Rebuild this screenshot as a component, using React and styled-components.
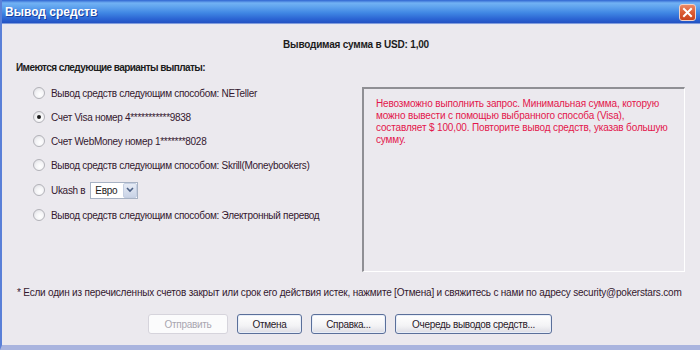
import React from "react";
import styled, { createGlobalStyle } from "styled-components";

const FONT = `"Liberation Sans", Arial, sans-serif`;

const Global = createGlobalStyle`
  html, body { margin: 0; padding: 0; background: #ebe9ee; }
  body { font-family: ${FONT}; }
  * { box-sizing: border-box; }
`;

const Window = styled.div`
  width: 700px;
  height: 350px;
  display: flex;
  flex-direction: column;
  background: #ebe9ee;
  border-left: 2px solid #5a80d8;
  border-bottom: 5px solid #a9b4de;
  overflow: hidden;
`;

const TitleBar = styled.div`
  height: 25px;
  flex: none;
  display: flex;
  align-items: center;
  justify-content: space-between;
  padding: 0 3px 1px 3px;
  margin-left: -2px;
  background: linear-gradient(
    to bottom,
    #2f64d0 0px,
    #72b2f4 3px,
    #5fa3ee 7px,
    #3f86e3 13px,
    #2b64d3 19px,
    #2352c2 23px,
    #dfe6f6 24px,
    #ebe9ee 25px
  );
`;

const Title = styled.span`
  color: #fff;
  font-weight: bold;
  font-size: 12px;
  text-shadow: 1px 1px 0 #1a3f9e;
  padding-left: 2px;
`;

const CloseButton = styled.div`
  width: 17px;
  height: 17px;
  border-radius: 3px;
  border: 1px solid #f3d2c6;
  background: linear-gradient(to bottom, #eb8a68 0%, #dc5e36 45%, #c8421c 100%);
  display: flex;
  align-items: center;
  justify-content: center;
  margin-right: 1px;
`;

const Body = styled.div`
  flex: 1;
  display: flex;
  flex-direction: column;
  padding: 13px 15px 0 13px;
  color: #34182f;
  font-size: 10px;
  letter-spacing: -0.3px;
`;

const Amount = styled.div`
  text-align: center;
  font-weight: bold;
  color: #1c1c1c;
  line-height: 14px;
  padding-left: 12px;
  letter-spacing: -0.2px;
`;

const Heading = styled.div`
  font-weight: bold;
  color: #1c1c1c;
  line-height: 14px;
  margin-top: 9px;
  padding-left: 1px;
  letter-spacing: -0.58px;
`;

const Main = styled.div`
  display: flex;
  align-items: flex-start;
  margin-top: 6px;
`;

const Options = styled.div`
  flex: 1;
  display: flex;
  flex-direction: column;
  padding-left: 18px;
`;

const Row = styled.label`
  display: flex;
  align-items: center;
  gap: 6px;
  height: ${(p) => (p.$tall ? "26px" : "24px")};
  color: #34182f;
`;

const Radio = styled.span`
  width: 12px;
  height: 12px;
  flex: none;
  border-radius: 50%;
  border: 1px solid #b2b2b8;
  background: radial-gradient(circle at 60% 65%, #ffffff 0%, #f4f4f6 45%, #d8d8de 100%);
  display: flex;
  align-items: center;
  justify-content: center;
  &::after {
    content: "";
    width: 4px;
    height: 4px;
    border-radius: 50%;
    background: ${(p) => (p.$checked ? "#1a1a1a" : "transparent")};
  }
`;

const Select = styled.div`
  display: flex;
  align-items: stretch;
  width: 48px;
  height: 17px;
  border: 1px solid #a7b2c4;
  background: #fff;
  margin-left: -1px;
`;

const SelectValue = styled.span`
  flex: 1;
  padding-left: 4px;
  line-height: 15px;
  color: #1c1c1c;
`;

const SelectButton = styled.span`
  width: 14px;
  display: flex;
  align-items: center;
  justify-content: center;
  border: 1px solid #c5cfe2;
  border-radius: 2px;
  background: linear-gradient(to bottom, #e6ebf5, #c9d3e6);
`;

const Panel = styled.div`
  width: 323px;
  height: 185px;
  margin-top: 6px;
  border-top: 2px solid #8f8f94;
  border-left: 2px solid #8f8f94;
  border-right: 1px solid #ffffff;
  border-bottom: 1px solid #ffffff;
  padding: 9px 4px 0 12px;
  color: #e3164c;
  line-height: 12px;
  white-space: nowrap;
  overflow: hidden;
  letter-spacing: -0.15px;
`;

const Footnote = styled.div`
  margin-top: 14px;
  padding-left: 2px;
  line-height: 14px;
  color: #34182f;
  white-space: nowrap;
  letter-spacing: -0.2px;
`;

const Buttons = styled.div`
  display: flex;
  justify-content: center;
  gap: 9px;
  margin-top: 14px;
`;

const Button = styled.div`
  width: ${(p) => p.$w}px;
  height: 20px;
  display: flex;
  align-items: center;
  justify-content: center;
  border-radius: 3px;
  border: 1px solid ${(p) => (p.$disabled ? "#d6d4dc" : "#5a6f9a")};
  background: ${(p) =>
    p.$disabled
      ? "#fbfbfc"
      : "linear-gradient(to bottom, #ffffff 0%, #f3f3f5 60%, #dcdce4 100%)"};
  color: ${(p) => (p.$disabled ? "#a9a6b0" : "#2a1a2a")};
  box-shadow: ${(p) => (p.$disabled ? "none" : "inset 0 0 0 1px #e8eef8")};
`;

const options = [
  { label: "Вывод средств следующим способом: NETeller" },
  { label: "Счет Visa номер 4***********9838", checked: true },
  { label: "Счет WebMoney номер 1*******8028" },
  { label: "Вывод средств следующим способом: Skrill(Moneybookers)" },
  { label: "Ukash в", select: true },
  { label: "Вывод средств следующим способом: Электронный перевод" },
];

export default function App() {
  return (
    <>
      <Global />
      <Window>
        <TitleBar>
          <Title>Вывод средств</Title>
          <CloseButton>
            <svg width="11" height="11" viewBox="0 0 11 11">
              <path d="M2 2 L9 9 M9 2 L2 9" stroke="#fff" strokeWidth="2" strokeLinecap="square" />
            </svg>
          </CloseButton>
        </TitleBar>
        <Body>
          <Amount>Выводимая сумма в USD: 1,00</Amount>
          <Heading>Имеются следующие варианты выплаты:</Heading>
          <Main>
            <Options>
              {options.map((o, i) => (
                <Row key={i} $tall={o.select}>
                  <Radio $checked={o.checked} />
                  <span>{o.label}</span>
                  {o.select && (
                    <Select>
                      <SelectValue>Евро</SelectValue>
                      <SelectButton>
                        <svg width="8" height="6" viewBox="0 0 8 6">
                          <path d="M1 1 L4 4 L7 1" stroke="#4d6185" strokeWidth="1.6" fill="none" />
                        </svg>
                      </SelectButton>
                    </Select>
                  )}
                </Row>
              ))}
            </Options>
            <Panel>
              Невозможно выполнить запрос. Минимальная сумма, которую
              <br />
              можно вывести с помощью выбранного способа (Visa),
              <br />
              составляет $ 100,00. Повторите вывод средств, указав большую
              <br />
              сумму.
            </Panel>
          </Main>
          <Footnote>
            * Если один из перечисленных счетов закрыт или срок его действия истек, нажмите [Отмена] и свяжитесь с нами по адресу security@pokerstars.com
          </Footnote>
          <Buttons>
            <Button $w={80} $disabled>Отправить</Button>
            <Button $w={65}>Отмена</Button>
            <Button $w={75}>Справка...</Button>
            <Button $w={157}>Очередь выводов средств...</Button>
          </Buttons>
        </Body>
      </Window>
    </>
  );
}
